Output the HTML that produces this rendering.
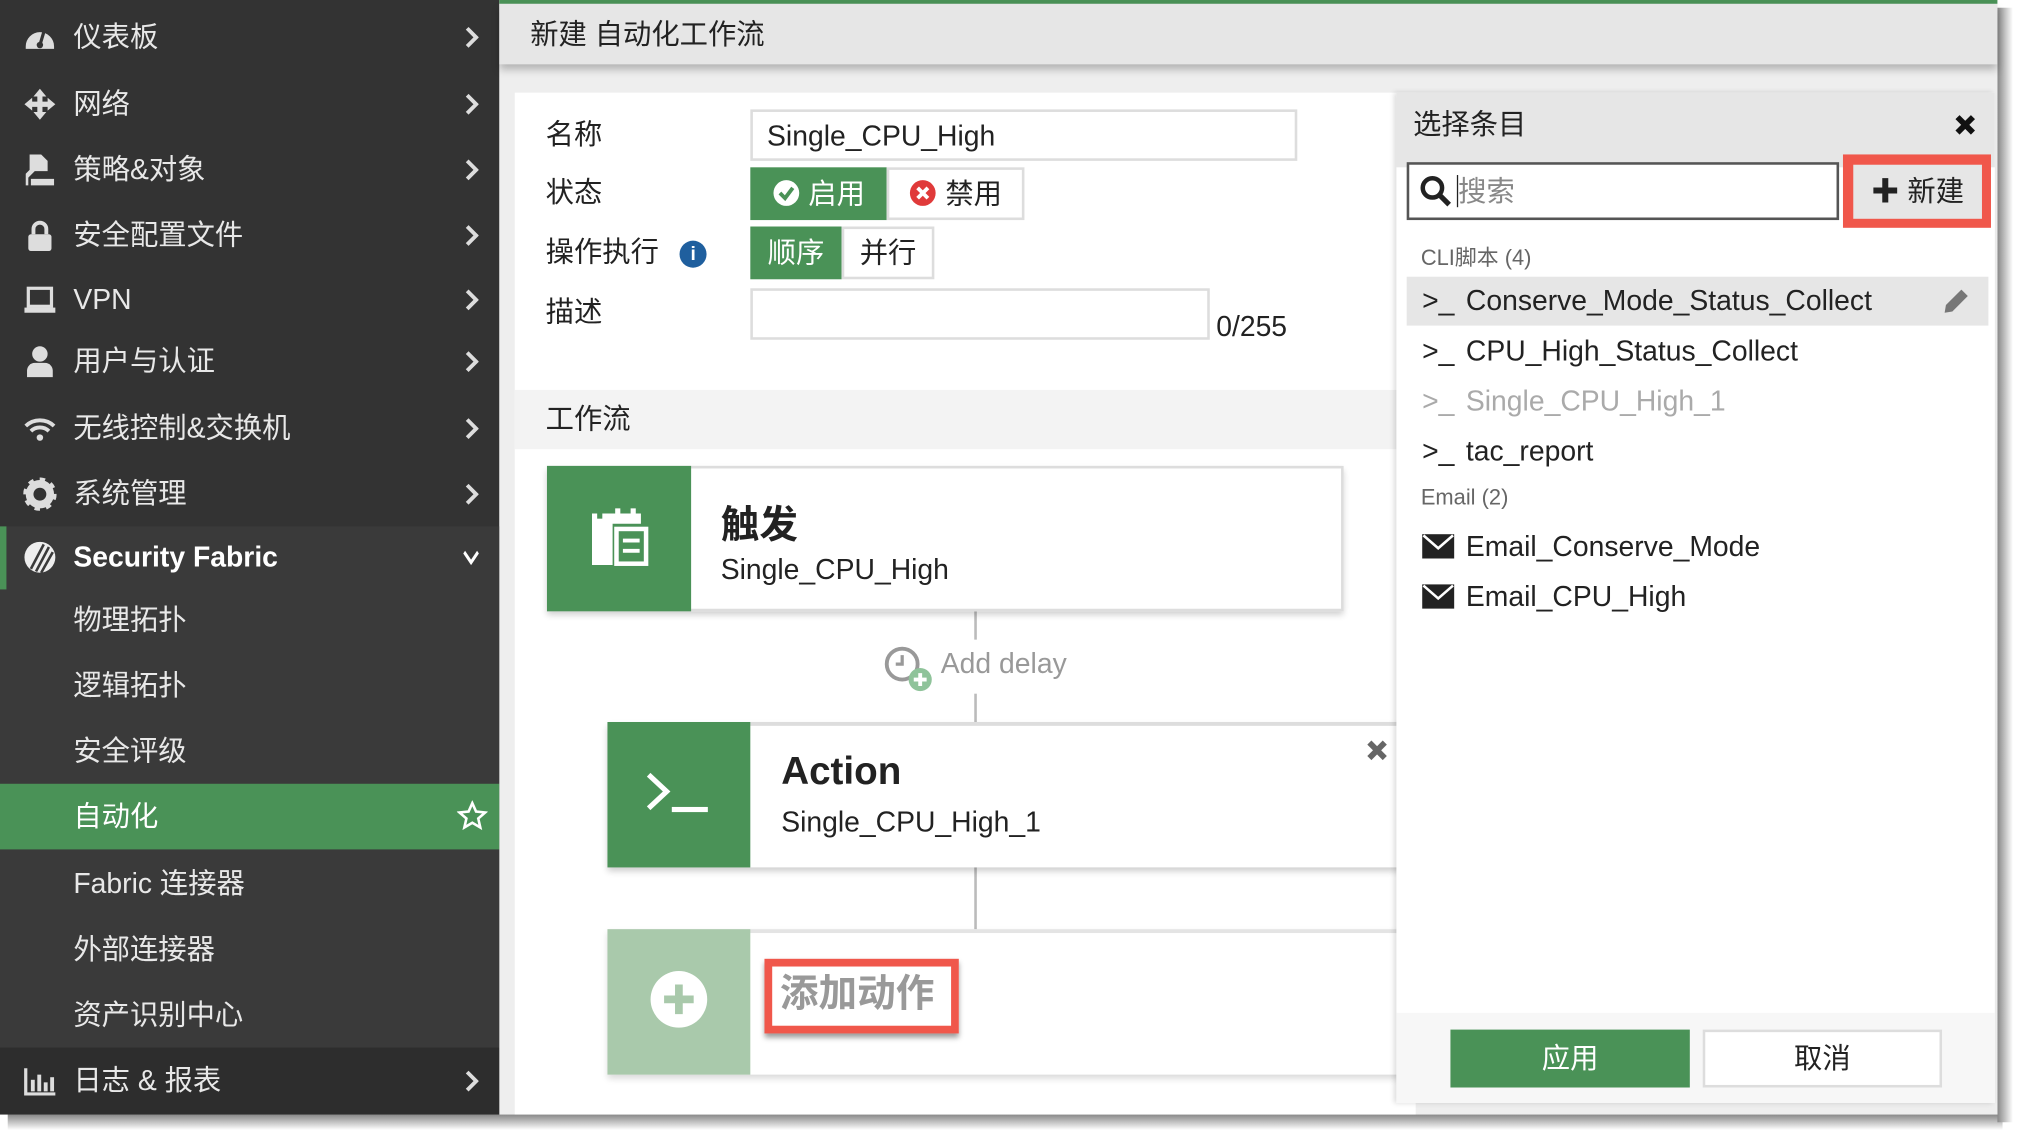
<!DOCTYPE html>
<html><head><meta charset="utf-8">
<style>
*{box-sizing:border-box;margin:0;padding:0}
html,body{width:2018px;height:1134px;overflow:hidden;background:#fff}
#s{position:absolute;left:0;top:0;width:1568px;height:881px;transform:scale(1.28699);transform-origin:0 0;font-family:"Liberation Sans","Noto Sans CJK SC",sans-serif;color:#222}
.a{position:absolute}
.sb{left:0;top:0;width:388px;height:866px;background:#333}
.it{position:absolute;left:0;width:388px;height:51px;color:#e8e8e8;font-size:22px;line-height:51px;padding-left:57px}
.it svg.ic{position:absolute;left:18px;top:13px;width:26px;height:26px}
.it svg.ch{position:absolute;right:16px;top:17px;width:12px;height:18px}
.lbl{position:absolute;left:424px;font-size:22px;line-height:30px}
.inp{position:absolute;background:#fff;border:2px solid #ddd}
.btn{position:absolute;font-size:22px;text-align:center;line-height:38px}
.row{position:absolute;left:1093px;width:452px;height:38px;font-size:22px;line-height:38px;padding-left:12px}
.row b{font-weight:normal;display:inline-block;width:34px}
.mail{display:inline-block;width:25px;height:19px;margin-right:9px;vertical-align:-2px}
</style></head><body>
<div id="s">
<div class="a" style="left:6px;top:866px;width:1550px;height:12px;background:linear-gradient(#888,#fff)"></div>
<div class="a" style="left:1552px;top:6px;width:12px;height:866px;background:linear-gradient(90deg,#888,#fff)"></div>

<div class="a sb"></div>
<div class="it" style="top:3px"><svg class="ic" viewBox="0 0 26 26"><path d="M2 20 A11 11 0 0 1 24 20 L24 22 L2 22Z" fill="#ddd"/><path d="M13 19 L16 9" stroke="#333" stroke-width="2.5"/><circle cx="13" cy="19" r="2.5" fill="#333"/></svg>仪表板<svg class="ch" viewBox="0 0 12 18"><polyline points="3,2 10,9 3,16" fill="none" stroke="#ddd" stroke-width="3"/></svg></div>
<div class="it" style="top:55px"><svg class="ic" viewBox="0 0 26 26"><path d="M13 1 L18 7 H15 V11 H19 V8 L25 13 L19 18 V15 H15 V19 H18 L13 25 L8 19 H11 V15 H7 V18 L1 13 L7 8 V11 H11 V7 H8Z" fill="#ddd"/></svg>网络<svg class="ch" viewBox="0 0 12 18"><polyline points="3,2 10,9 3,16" fill="none" stroke="#ddd" stroke-width="3"/></svg></div>
<div class="it" style="top:106px"><svg class="ic" viewBox="0 0 26 26"><path d="M5 1 H14 L19 6 V14 H9 L4 19 V25 H2 V16 L5 13Z" fill="#ddd"/><path d="M6 20 H24 V25 H6Z" fill="#ddd"/></svg>策略&amp;对象<svg class="ch" viewBox="0 0 12 18"><polyline points="3,2 10,9 3,16" fill="none" stroke="#ddd" stroke-width="3"/></svg></div>
<div class="it" style="top:157px"><svg class="ic" viewBox="0 0 26 26"><path d="M8 12 V8 A5 5 0 0 1 18 8 V12" fill="none" stroke="#ddd" stroke-width="3"/><rect x="4" y="12" width="18" height="13" rx="2" fill="#ddd"/></svg>安全配置文件<svg class="ch" viewBox="0 0 12 18"><polyline points="3,2 10,9 3,16" fill="none" stroke="#ddd" stroke-width="3"/></svg></div>
<div class="it" style="top:207px"><svg class="ic" viewBox="0 0 26 26"><rect x="4" y="4" width="18" height="14" fill="none" stroke="#ddd" stroke-width="2.5"/><rect x="1" y="19" width="24" height="4" fill="#ddd"/></svg>VPN<svg class="ch" viewBox="0 0 12 18"><polyline points="3,2 10,9 3,16" fill="none" stroke="#ddd" stroke-width="3"/></svg></div>
<div class="it" style="top:255px"><svg class="ic" viewBox="0 0 26 26"><circle cx="13" cy="7" r="6" fill="#ddd"/><path d="M3 25 V20 A6 6 0 0 1 9 14 H17 A6 6 0 0 1 23 20 V25Z" fill="#ddd"/></svg>用户与认证<svg class="ch" viewBox="0 0 12 18"><polyline points="3,2 10,9 3,16" fill="none" stroke="#ddd" stroke-width="3"/></svg></div>
<div class="it" style="top:307px"><svg class="ic" viewBox="0 0 26 26"><path d="M2 11 A16 16 0 0 1 24 11" fill="none" stroke="#ddd" stroke-width="3"/><path d="M6 15 A10 10 0 0 1 20 15" fill="none" stroke="#ddd" stroke-width="3"/><circle cx="13" cy="20" r="2.5" fill="#ddd"/></svg>无线控制&amp;交换机<svg class="ch" viewBox="0 0 12 18"><polyline points="3,2 10,9 3,16" fill="none" stroke="#ddd" stroke-width="3"/></svg></div>
<div class="it" style="top:358px"><svg class="ic" viewBox="0 0 26 26"><circle cx="13" cy="13" r="8" fill="none" stroke="#ddd" stroke-width="6" stroke-dasharray="0"/><circle cx="13" cy="13" r="11" fill="none" stroke="#ddd" stroke-width="4" stroke-dasharray="4 4.6"/></svg>系统管理<svg class="ch" viewBox="0 0 12 18"><polyline points="3,2 10,9 3,16" fill="none" stroke="#ddd" stroke-width="3"/></svg></div>
<div class="a" style="left:0;top:409px;width:388px;height:405px;background:#3a3a3a"></div>
<div class="a" style="left:0;top:409px;width:5px;height:49px;background:#4a9257"></div>
<div class="it" style="top:407px;font-weight:bold;color:#fff"><svg class="ic" viewBox="0 0 26 26"><circle cx="13" cy="13" r="12" fill="#eee"/><path d="M6 22 L16 3 M10 24 L20 5 M14 25 L23 9" stroke="#3a3a3a" stroke-width="2"/></svg>Security Fabric<svg class="ch" viewBox="0 0 12 18" style="width:18px;right:13px"><polyline points="1,5 9,13 17,5" fill="none" stroke="#fff" stroke-width="3" transform="scale(.67,1)"/></svg></div>
<div class="it" style="top:456px">物理拓扑</div>
<div class="it" style="top:507px">逻辑拓扑</div>
<div class="it" style="top:558px">安全评级</div>
<div class="a" style="left:0;top:609px;width:388px;height:51px;background:#4a9257"></div>
<div class="it" style="top:609px;color:#fff">自动化<svg style="position:absolute;right:9px;top:13px;width:24px;height:24px" viewBox="0 0 24 24"><path d="M12 2 L14.9 8.6 L22 9.3 L16.6 14 L18.2 21 L12 17.3 L5.8 21 L7.4 14 L2 9.3 L9.1 8.6Z" fill="none" stroke="#fff" stroke-width="2"/></svg></div>
<div class="it" style="top:661px">Fabric 连接器</div>
<div class="it" style="top:712px">外部连接器</div>
<div class="it" style="top:763px">资产识别中心</div>
<div class="a" style="left:0;top:814px;width:388px;height:52px;background:#2d2d2d"></div>
<div class="it" style="top:814px"><svg class="ic" viewBox="0 0 26 26"><path d="M2 3 V23 H25" fill="none" stroke="#ddd" stroke-width="2.5"/><rect x="6" y="12" width="3" height="9" fill="#ddd"/><rect x="11" y="8" width="3" height="13" fill="#ddd"/><rect x="16" y="14" width="3" height="7" fill="#ddd"/><rect x="21" y="10" width="3" height="11" fill="#ddd"/></svg>日志 &amp; 报表<svg class="ch" viewBox="0 0 12 18"><polyline points="3,2 10,9 3,16" fill="none" stroke="#ddd" stroke-width="3"/></svg></div>

<!-- main -->
<div class="a" style="left:388px;top:0;width:1164px;height:866px;background:#eee"></div>
<div class="a" style="left:388px;top:0;width:1164px;height:3px;background:#4a9257"></div>
<div class="a" style="left:388px;top:3px;width:1164px;height:47px;background:#e6e6e6;box-shadow:0 4px 6px rgba(0,0,0,.25);font-size:22px;line-height:47px;padding-left:24px">新建 自动化工作流</div>
<div class="a" style="left:400px;top:72px;width:700px;height:794px;background:#fff"></div>

<div class="lbl" style="top:90px">名称</div>
<div class="lbl" style="top:135px">状态</div>
<div class="lbl" style="top:181px">操作执行 <span style="display:inline-block;width:21px;height:21px;border-radius:50%;background:#1f5f9e;color:#fff;font-size:15px;line-height:21px;text-align:center;font-weight:bold;margin-left:10px;vertical-align:1px">i</span></div>
<div class="lbl" style="top:228px">描述</div>
<div class="inp" style="left:583px;top:85px;width:425px;height:40px;font-size:22px;line-height:38px;padding-left:11px">Single_CPU_High</div>
<div class="btn" style="left:583px;top:130px;width:106px;height:41px;background:#4a9257;color:#fff;line-height:41px"><svg width="22" height="22" viewBox="0 0 22 22" style="vertical-align:-3px"><circle cx="11" cy="11" r="10" fill="#fff"/><polyline points="6,11 10,15 16,7" fill="none" stroke="#4a9257" stroke-width="3"/></svg> 启用</div>
<div class="btn" style="left:689px;top:130px;width:107px;height:41px;border:2px solid #ddd;background:#fff"><svg width="22" height="22" viewBox="0 0 22 22" style="vertical-align:-3px"><circle cx="11" cy="11" r="10" fill="#e03a3a"/><path d="M7 7 L15 15 M15 7 L7 15" stroke="#fff" stroke-width="3"/></svg> 禁用</div>
<div class="btn" style="left:583px;top:176px;width:71px;height:41px;background:#4a9257;color:#fff;line-height:41px">顺序</div>
<div class="btn" style="left:654px;top:176px;width:72px;height:41px;border:2px solid #ddd;background:#fff">并行</div>
<div class="inp" style="left:583px;top:224px;width:357px;height:40px"></div>
<div class="a" style="left:945px;top:241px;font-size:22px">0/255</div>

<div class="a" style="left:400px;top:303px;width:685px;height:46px;background:#f3f3f3;font-size:22px;line-height:46px;padding-left:24px">工作流</div>

<div class="a" style="left:757px;top:475px;width:2px;height:250px;background:#bbb"></div>
<div class="a" style="left:680px;top:497px;width:160px;height:42px;background:#fff"></div>
<svg class="a" style="left:686px;top:501px" width="40" height="38" viewBox="0 0 40 38"><circle cx="15" cy="15" r="12" fill="none" stroke="#999" stroke-width="3"/><path d="M15 8 V15 H10" fill="none" stroke="#999" stroke-width="2.5"/><circle cx="29" cy="27" r="9" fill="#8fc39a"/><path d="M29 22 V32 M24 27 H34" stroke="#fff" stroke-width="3"/></svg>
<div class="a" style="left:731px;top:503px;font-size:22px;color:#999">Add delay</div>

<div class="a" style="left:425px;top:362px;width:619px;height:113px;background:#fff;border:2px solid #ddd;box-shadow:0 3px 5px rgba(0,0,0,.2)"></div>
<div class="a" style="left:425px;top:362px;width:112px;height:113px;background:#4a9257"></div>
<svg class="a" style="left:458px;top:393px" width="48" height="50" viewBox="0 0 48 50"><path d="M2 6 H40 V14 H18 V46 H2Z" fill="#fff"/><rect x="6" y="2" width="4" height="8" fill="#4a9257"/><rect x="20" y="2" width="4" height="8" fill="#fff"/><rect x="32" y="2" width="4" height="8" fill="#fff"/><rect x="21" y="18" width="23" height="27" fill="none" stroke="#fff" stroke-width="3.5"/><path d="M26 27 H39 M26 35 H39" stroke="#fff" stroke-width="3"/></svg>
<div class="a" style="left:560px;top:383px;font-size:30px;font-weight:bold">触发</div>
<div class="a" style="left:560px;top:430px;font-size:22px">Single_CPU_High</div>

<div class="a" style="left:472px;top:561px;width:620px;height:113px;background:#fff;border-top:3px solid #ddd;box-shadow:0 3px 5px rgba(0,0,0,.2)"></div>
<div class="a" style="left:472px;top:561px;width:111px;height:113px;background:#4a9257"></div>
<svg class="a" style="left:500px;top:598px" width="56" height="40" viewBox="0 0 56 40"><polyline points="4,4 18,17 4,30" fill="none" stroke="#fff" stroke-width="4"/><rect x="22" y="29" width="28" height="4" fill="#fff"/></svg>
<div class="a" style="left:607px;top:583px;font-size:30px;font-weight:bold">Action</div>
<div class="a" style="left:607px;top:626px;font-size:22px">Single_CPU_High_1</div>
<svg class="a" style="left:1061px;top:574px" width="18" height="18" viewBox="0 0 18 18"><path d="M3 3 L15 15 M15 3 L3 15" stroke="#666" stroke-width="4.5"/></svg>

<div class="a" style="left:472px;top:722px;width:620px;height:113px;background:#fff;border-top:3px solid #e4e4e4;box-shadow:0 3px 5px rgba(0,0,0,.15)"></div>
<div class="a" style="left:472px;top:722px;width:111px;height:113px;background:#a9c9ab"></div>
<svg class="a" style="left:505px;top:754px" width="45" height="45" viewBox="0 0 45 45"><circle cx="22.5" cy="22.5" r="22" fill="#fff"/><path d="M22.5 11 V34 M11 22.5 H34" stroke="#a9c9ab" stroke-width="6"/></svg>
<div class="a" style="left:594px;top:745px;width:151px;height:58px;border:6px solid #f0574b;box-shadow:0 3px 4px rgba(0,0,0,.4);font-size:30px;color:#999;line-height:44px;padding-left:6px;font-weight:bold;background:#fff">添加动作</div>

<!-- right panel -->
<div class="a" style="left:1085px;top:72px;width:465px;height:785px;background:#fff;box-shadow:-2px 0 4px rgba(0,0,0,.15)"></div>
<div class="a" style="left:1085px;top:72px;width:465px;height:58px;background:#e6e6e6;font-size:22px;line-height:50px;padding-left:13px">选择条目</div>
<svg class="a" style="left:1518px;top:88px" width="18" height="18" viewBox="0 0 18 18"><path d="M3 3 L15 15 M15 3 L3 15" stroke="#111" stroke-width="4.5"/></svg>
<div class="a" style="left:1093px;top:126px;width:336px;height:45px;border:2px solid #555;background:#fff;font-size:22px;line-height:41px;padding-left:37px;color:#888"><span style="border-left:1px solid #222">搜索</span></div>
<svg class="a" style="left:1103px;top:136px" width="26" height="26" viewBox="0 0 26 26"><circle cx="10" cy="10" r="7.5" fill="none" stroke="#222" stroke-width="3.5"/><path d="M15 15 L23 23" stroke="#222" stroke-width="4"/></svg>
<div class="a" style="left:1432px;top:120px;width:115px;height:57px;background:#f0574b"></div>
<div class="a" style="left:1440px;top:128px;width:100px;height:42px;background:#e6e6e6;font-size:22px;line-height:42px;text-align:center"><b>✚</b> 新建</div>
<div class="a" style="left:1104px;top:186px;font-size:17px;color:#666">CLI脚本 (4)</div>
<div class="row" style="top:215px;background:#e6e6e6"><b>&gt;_</b>Conserve_Mode_Status_Collect<svg style="position:absolute;right:14px;top:8px" width="22" height="22" viewBox="0 0 22 22"><path d="M15 2 L20 7 L8 19 L2 20 L3 14Z" fill="#777"/></svg></div>
<div class="row" style="top:254px"><b>&gt;_</b>CPU_High_Status_Collect</div>
<div class="row" style="top:293px;color:#aaa"><b>&gt;_</b>Single_CPU_High_1</div>
<div class="row" style="top:332px"><b>&gt;_</b>tac_report</div>
<div class="a" style="left:1104px;top:377px;font-size:17px;color:#666">Email (2)</div>
<div class="row" style="top:406px"><svg class="mail" viewBox="0 0 25 19"><rect width="25" height="19" fill="#222"/><polyline points="1,1 12.5,11 24,1" fill="none" stroke="#fff" stroke-width="2"/></svg>Email_Conserve_Mode</div>
<div class="row" style="top:445px"><svg class="mail" viewBox="0 0 25 19"><rect width="25" height="19" fill="#222"/><polyline points="1,1 12.5,11 24,1" fill="none" stroke="#fff" stroke-width="2"/></svg>Email_CPU_High</div>
<div class="a" style="left:1085px;top:787px;width:465px;height:70px;background:#f7f7f7"></div>
<div class="btn" style="left:1127px;top:800px;width:186px;height:45px;background:#4a9257;color:#fff;line-height:45px">应用</div>
<div class="btn" style="left:1323px;top:800px;width:186px;height:45px;background:#fff;border:2px solid #ddd;line-height:41px">取消</div>
</div>
</body></html>
